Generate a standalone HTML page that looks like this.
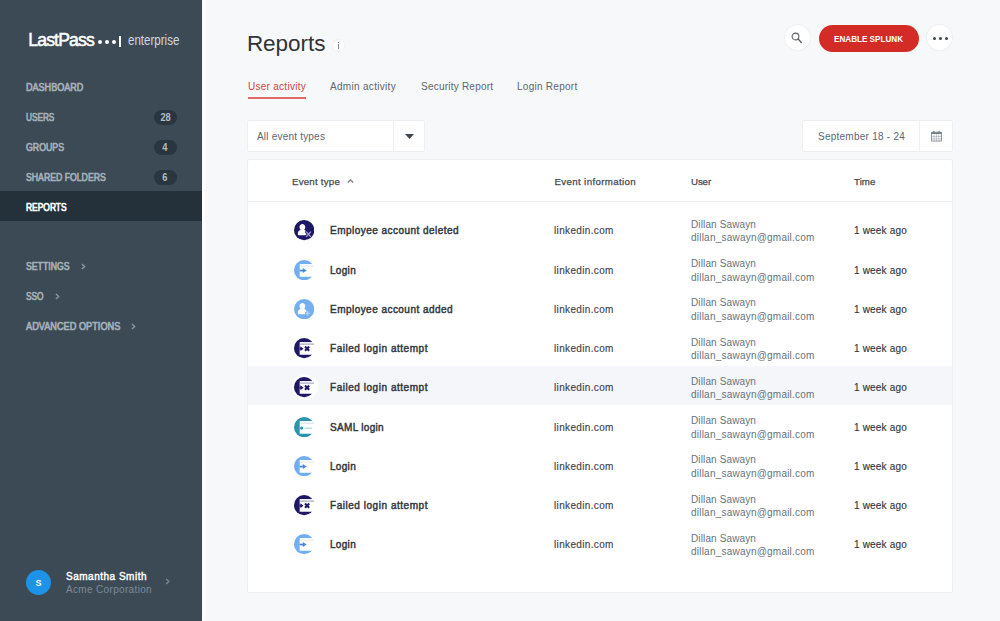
<!DOCTYPE html>
<html><head><meta charset="utf-8">
<style>
*{box-sizing:border-box;margin:0;padding:0}
html,body{width:1000px;height:621px;overflow:hidden}
body{font-family:"Liberation Sans",sans-serif;background:#f7f8fa;position:relative;color:#3a3f45}
.abs{position:absolute;white-space:nowrap}
#side{position:absolute;left:0;top:0;width:201.700px;height:621px;background:#3c4a56}
.nav{position:absolute;left:26.100px;font-size:10px;-webkit-text-stroke:0.65px;color:#a7b1b9;line-height:12px;white-space:nowrap;transform-origin:0 50%}
.badge{position:absolute;left:153.600px;width:23px;height:15px;border-radius:7.500px;background:#29353f;color:#b4bdc4;font-size:10px;font-weight:bold;text-align:center;line-height:15px}.badge span{display:inline-block;transform:scaleX(0.93)}
#active{position:absolute;left:0;top:191.200px;width:201.700px;height:29.600px;background:#25313a}
.tab{position:absolute;top:80px;font-size:10px;color:#5d6670;line-height:13px;white-space:nowrap}
.box{position:absolute;background:#fff;box-shadow:0 0 0 1px #eceef2;border-radius:1.500px}
.th{position:absolute;top:175px;font-size:9.7px;color:#454a51;-webkit-text-stroke:0.25px #454a51;line-height:13px;white-space:nowrap}
.row{position:absolute;left:248px;width:704px;height:39px}
.row div{position:absolute;white-space:nowrap;line-height:13px}
.lbl{left:82px;top:13.600px;font-size:10px;-webkit-text-stroke:0.45px #33383e;color:#33383e;transform-origin:0 50%}
.inf{left:306px;top:13.400px;font-size:10px;color:#3f444a;-webkit-text-stroke:0.15px #3f444a}
.un{left:443px;top:6.900px;font-size:10px;color:#69727b}
.um{left:443px;top:20.400px;font-size:10px;color:#69727b}
.tm{left:606px;top:13.400px;font-size:10px;color:#33383e;-webkit-text-stroke:0.15px #33383e}
.row svg{position:absolute;left:46.200px;top:9.600px}
</style></head><body>

<div class="abs" style="left:201.700px;top:0;width:4px;height:621px;background:linear-gradient(90deg,#fff 0,#fff 60%,#f7f8fa 100%)"></div>
<div id="side">
  <div class="abs" style="letter-spacing:-0.847px;left:28.300px;top:28.700px;font-size:17.6px;color:#fff;line-height:22px;-webkit-text-stroke:0.5px #fff">LastPass</div>
  <div class="abs" style="left:98.300px;top:40.200px;width:3.600px;height:3.600px;border-radius:2px;background:#fff"></div>
  <div class="abs" style="left:105.100px;top:40.200px;width:3.600px;height:3.600px;border-radius:2px;background:#fff"></div>
  <div class="abs" style="left:112px;top:40.200px;width:3.600px;height:3.600px;border-radius:2px;background:#fff"></div>
  <div class="abs" style="left:119.200px;top:36px;width:1.500px;height:11px;background:#fff"></div>
  <div class="abs" style="transform:scaleX(0.8255);left:128.400px;top:33px;font-size:14px;color:#d3d8dd;line-height:15px;transform-origin:0 50%">enterprise</div>

  <div class="nav" style="transform:scaleX(0.9044);top:82.0px">DASHBOARD</div>
  <div class="nav" style="transform:scaleX(0.8214);top:112.0px">USERS</div>
  <div class="badge" style="top:109.7px"><span>28</span></div>
  <div class="nav" style="transform:scaleX(0.8767);top:142.0px">GROUPS</div>
  <div class="badge" style="top:139.7px"><span>4</span></div>
  <div class="nav" style="transform:scaleX(0.8703);top:172.0px">SHARED FOLDERS</div>
  <div class="badge" style="top:169.7px"><span>6</span></div>
  <div id="active"></div>
  <div class="nav" style="transform:scaleX(0.8428);top:202.0px;color:#fff">REPORTS</div>
  <div class="nav" style="transform:scaleX(0.8697);top:261.0px">SETTINGS</div>
  <div class="nav" style="transform:scaleX(0.8331);top:291.0px">SSO</div>
  <div class="nav" style="transform:scaleX(0.9190);top:321.0px">ADVANCED OPTIONS</div>
  <svg class="abs" style="left:79px;top:262px" width="8" height="9" viewBox="0 0 8 9"><path d="M2.900 1.900 L5.700 4.500 L2.900 7.100" fill="none" stroke="#8d99a3" stroke-width="1.300"/></svg>
  <svg class="abs" style="left:53px;top:292px" width="8" height="9" viewBox="0 0 8 9"><path d="M2.900 1.900 L5.700 4.500 L2.900 7.100" fill="none" stroke="#8d99a3" stroke-width="1.300"/></svg>
  <svg class="abs" style="left:129px;top:322px" width="8" height="9" viewBox="0 0 8 9"><path d="M2.900 1.900 L5.700 4.500 L2.900 7.100" fill="none" stroke="#8d99a3" stroke-width="1.300"/></svg>

  <div class="abs" style="left:26px;top:570px;width:25px;height:25px;border-radius:12.500px;background:#1c93e6;color:#fff;font-size:9px;font-weight:bold;text-align:center;line-height:26px">S</div>
  <div class="abs" style="letter-spacing:0.504px;left:66px;top:570px;font-size:10px;-webkit-text-stroke:0.4px #fff;color:#fff;line-height:13px">Samantha Smith</div>
  <div class="abs" style="letter-spacing:0.338px;left:66px;top:583px;font-size:10px;color:#7d8a95;line-height:13px">Acme Corporation</div>
  <svg class="abs" style="left:163px;top:577px" width="8" height="9" viewBox="0 0 8 9"><path d="M3.100 1.900 L5.900 4.500 L3.100 7.100" fill="none" stroke="#7a8691" stroke-width="1.300"/></svg>
</div>

<div class="abs" style="letter-spacing:-0.042px;left:246.900px;top:30.300px;font-size:22.5px;color:#2f3338;line-height:28px">Reports</div>
<div class="abs" style="left:332.700px;top:40px;width:11px;height:11px;border-radius:5.500px;background:#fdfdfe;box-shadow:0 0 0 1px #f1f2f5"></div>
<div class="abs" style="left:337.700px;top:42px;width:1.100px;height:1.200px;background:#8e9399"></div><div class="abs" style="left:337.700px;top:44px;width:1.100px;height:4.600px;background:#8e9399"></div>

<!-- top right -->
<div class="abs" style="left:784.800px;top:25.400px;width:25px;height:25px;border-radius:13px;background:#fff;box-shadow:0 0 0 1px #eef0f3"></div>
<svg class="abs" style="left:790.400px;top:30.800px" width="14" height="14" viewBox="0 0 14 14"><circle cx="5.500" cy="5.500" r="3.400" fill="none" stroke="#5a6169" stroke-width="1.100"/><path d="M8.100 8.100 L11.400 11.400" stroke="#5a6169" stroke-width="1.400" stroke-linecap="round"/></svg>
<div class="abs" style="left:819px;top:24.500px;width:100px;height:27px;border-radius:13.500px;background:#d32c27"></div>
<div class="abs" style="transform:scaleX(0.8543);left:834px;top:32.800px;color:#fff;font-size:9.5px;font-weight:bold;line-height:12px;transform-origin:0 50%">ENABLE SPLUNK</div>
<div class="abs" style="left:927.200px;top:25.400px;width:25px;height:25px;border-radius:13px;background:#fff;box-shadow:0 0 0 1px #eef0f3"></div>
<div class="abs" style="left:932.6px;top:36.500px;width:3px;height:3px;border-radius:2px;background:#3f464d"></div>
<div class="abs" style="left:938.6px;top:36.500px;width:3px;height:3px;border-radius:2px;background:#3f464d"></div>
<div class="abs" style="left:944.6px;top:36.500px;width:3px;height:3px;border-radius:2px;background:#3f464d"></div>

<!-- tabs -->
<div class="tab" style="letter-spacing:0.273px;left:248px;color:#d4423e">User activity</div>
<div class="abs" style="left:248px;top:96.800px;width:58px;height:1.800px;background:#dc6a66"></div>
<div class="tab" style="letter-spacing:0.308px;left:330px">Admin activity</div>
<div class="tab" style="letter-spacing:0.225px;left:421px">Security Report</div>
<div class="tab" style="letter-spacing:0.270px;left:517px">Login Report</div>

<!-- filters -->
<div class="box" style="left:247.600px;top:120.700px;width:176.800px;height:30.600px"></div>
<div class="abs" style="left:393.200px;top:120.700px;width:1px;height:30.600px;background:#eef0f3"></div>
<div class="abs" style="letter-spacing:0.204px;left:257px;top:130px;font-size:10px;color:#5d6670;line-height:13px">All event types</div>
<svg class="abs" style="left:405px;top:134px" width="9" height="5" viewBox="0 0 9 5"><path d="M0 0 L9 0 L4.500 5 Z" fill="#3f464d"/></svg>

<div class="box" style="left:802.600px;top:120.700px;width:149.800px;height:30.600px"></div>
<div class="abs" style="left:919.400px;top:120.700px;width:1px;height:30.600px;background:#eef0f3"></div>
<div class="abs" style="letter-spacing:0.245px;left:818px;top:130px;font-size:10px;color:#5d6670;line-height:13px">September 18 - 24</div>
<svg class="abs" style="left:931px;top:130.200px" width="11" height="11.500" viewBox="0 0 12 13"><rect x="0.500" y="2.500" width="11" height="10" fill="#fbfbfc" stroke="#757d85" stroke-width="0.900"/><rect x="0.500" y="2.500" width="11" height="2" fill="#757d85"/><path d="M3 0.800v2.500M9 0.800v2.500" stroke="#757d85" stroke-width="1.200"/><path d="M3.300 5v7.500M6 5v7.500M8.700 5v7.500M0.500 7.300h11M0.500 10h11" stroke="#8a929a" stroke-width="0.500"/></svg>

<!-- table -->
<div class="box" style="left:247.600px;top:159.800px;width:704.800px;height:432px"></div>
<div class="abs" style="left:248px;top:201px;width:704px;height:1px;background:#eceef1"></div>
<div class="th" style="letter-spacing:0.222px;left:292px">Event type</div>
<svg class="abs" style="left:346px;top:178px" width="9" height="6" viewBox="0 0 9 6"><path d="M1.800 4.500 L4.500 1.800 L7.200 4.500" fill="none" stroke="#757d85" stroke-width="1.300"/></svg>
<div class="th" style="letter-spacing:0.359px;left:554.500px">Event information</div>
<div class="th" style="letter-spacing:-0.117px;left:691px">User</div>
<div class="th" style="letter-spacing:0.082px;left:854px">Time</div>



<div class="abs" style="left:248px;top:366.400px;width:704px;height:38.800px;background:#f5f6f9"></div>
<div class="abs" style="left:291.800px;top:374.400px;width:26px;height:26px;border-radius:13px;background:radial-gradient(circle,rgba(255,255,255,.9) 0,rgba(255,255,255,.75) 70%,rgba(255,255,255,0) 100%)"></div>
<div class="row" style="top:210.9px"><svg width="20.300" height="20.300" viewBox="0 0 20 20"><g fill="#1e1766"><circle cx="10" cy="10" r="10"/><path fill="#fff" d="M8.300 3.900c1.600 0 2.800 1.300 2.800 3.100 0 1-.4 1.900-1 2.500l0 .3c1.700.5 2.600 1.500 2.600 2.900v1.700c0 .4-.3.700-.7.700H4.500c-.4 0-.7-.3-.7-.7v-1.700c0-1.400.9-2.400 2.600-2.900l0-.3c-.6-.6-1-1.500-1-2.500 0-1.800 1.200-3.100 2.900-3.100z"/></g><path d="M11.600 11l5.200 6M16.800 11l-5.200 6" stroke="#1e1766" stroke-width="2.800"/><path d="M12 11.400l4.600 5.200M16.600 11.400l-4.600 5.200" stroke="#a9abd8" stroke-width="1.200"/></svg><div class="lbl" style="letter-spacing:0.464px">Employee account deleted</div><div class="inf" style="letter-spacing:0.351px">linkedin.com</div><div class="un" style="letter-spacing:0.125px">Dillan Sawayn</div><div class="um" style="letter-spacing:0.220px">dillan_sawayn@gmail.com</div><div class="tm" style="letter-spacing:0.184px">1 week ago</div></div>
<div class="row" style="top:250.15px"><svg width="20.300" height="20.300" viewBox="0 0 20 20"><g fill="#70aef0"><circle cx="10" cy="10" r="10"/><rect x="5.600" y="4" width="16" height="12.500" fill="#fff"/></g><path d="M5.600 5.950h15" stroke="#cbd9ea" stroke-width="0.600"/><path d="M5.600 10.400h4" stroke="#4585de" stroke-width="1.700"/><path d="M8.700 8l3.700 2.400-3.700 2.400z" fill="#4585de"/></svg><div class="lbl" style="letter-spacing:0.306px">Login</div><div class="inf" style="letter-spacing:0.351px">linkedin.com</div><div class="un" style="letter-spacing:0.125px">Dillan Sawayn</div><div class="um" style="letter-spacing:0.220px">dillan_sawayn@gmail.com</div><div class="tm" style="letter-spacing:0.184px">1 week ago</div></div>
<div class="row" style="top:289.4px"><svg width="20.300" height="20.300" viewBox="0 0 20 20"><g fill="#74aff0"><circle cx="10" cy="10" r="10"/><path fill="#fff" d="M8.300 3.900c1.600 0 2.800 1.300 2.800 3.100 0 1-.4 1.900-1 2.500l0 .3c1.700.5 2.600 1.500 2.600 2.900v1.700c0 .4-.3.700-.7.700H4.500c-.4 0-.7-.3-.7-.7v-1.700c0-1.400.9-2.400 2.600-2.900l0-.3c-.6-.6-1-1.500-1-2.500 0-1.800 1.200-3.100 2.900-3.100z"/></g><path d="M13.500 11.400v5.400M10.800 14.100h5.400" stroke="#74aff0" stroke-width="2.600"/><path d="M13.500 12v4.200M11.400 14.100h4.200" stroke="#c9dff9" stroke-width="1"/></svg><div class="lbl" style="letter-spacing:0.461px">Employee account added</div><div class="inf" style="letter-spacing:0.351px">linkedin.com</div><div class="un" style="letter-spacing:0.125px">Dillan Sawayn</div><div class="um" style="letter-spacing:0.220px">dillan_sawayn@gmail.com</div><div class="tm" style="letter-spacing:0.184px">1 week ago</div></div>
<div class="row" style="top:328.65px"><svg width="20.300" height="20.300" viewBox="0 0 20 20"><g fill="#1e1766"><circle cx="10" cy="10" r="10"/><rect x="5.600" y="4" width="16" height="12.500" fill="#fff"/></g><path d="M5.600 6h15" stroke="#8c8bb0" stroke-width="0.900"/><path d="M5.600 10.500h1.800" stroke="#1e1766" stroke-width="1.900"/><path d="M6.300 8.100l3.100 2.400-3.100 2.400z" fill="#1e1766"/><path d="M10.800 8.400l4.200 4.200M15 8.400l-4.200 4.200" stroke="#1e1766" stroke-width="2"/></svg><div class="lbl" style="letter-spacing:0.536px">Failed login attempt</div><div class="inf" style="letter-spacing:0.351px">linkedin.com</div><div class="un" style="letter-spacing:0.125px">Dillan Sawayn</div><div class="um" style="letter-spacing:0.220px">dillan_sawayn@gmail.com</div><div class="tm" style="letter-spacing:0.184px">1 week ago</div></div>
<div class="row" style="top:367.9px"><svg width="20.300" height="20.300" viewBox="0 0 20 20"><g fill="#1e1766"><circle cx="10" cy="10" r="10"/><rect x="5.600" y="4" width="16" height="12.500" fill="#fff"/></g><path d="M5.600 6h15" stroke="#8c8bb0" stroke-width="0.900"/><path d="M5.600 10.500h1.800" stroke="#1e1766" stroke-width="1.900"/><path d="M6.300 8.100l3.100 2.400-3.100 2.400z" fill="#1e1766"/><path d="M10.800 8.400l4.200 4.200M15 8.400l-4.200 4.200" stroke="#1e1766" stroke-width="2"/></svg><div class="lbl" style="letter-spacing:0.536px">Failed login attempt</div><div class="inf" style="letter-spacing:0.351px">linkedin.com</div><div class="un" style="letter-spacing:0.125px">Dillan Sawayn</div><div class="um" style="letter-spacing:0.220px">dillan_sawayn@gmail.com</div><div class="tm" style="letter-spacing:0.184px">1 week ago</div></div>
<div class="row" style="top:407.15px"><svg width="20.300" height="20.300" viewBox="0 0 20 20"><g fill="#2b93ad"><circle cx="10" cy="10" r="10"/><rect x="5.600" y="4" width="16" height="12.500" fill="#fff"/></g><path d="M5.600 6.050h15" stroke="#b5d5dc" stroke-width="0.700"/><circle cx="7.500" cy="10.900" r="1.600" fill="#2b93ad"/><path d="M10.400 11.100h7.500" stroke="#b9dde4" stroke-width="1.400"/></svg><div class="lbl" style="letter-spacing:0.322px">SAML login</div><div class="inf" style="letter-spacing:0.351px">linkedin.com</div><div class="un" style="letter-spacing:0.125px">Dillan Sawayn</div><div class="um" style="letter-spacing:0.220px">dillan_sawayn@gmail.com</div><div class="tm" style="letter-spacing:0.184px">1 week ago</div></div>
<div class="row" style="top:446.4px"><svg width="20.300" height="20.300" viewBox="0 0 20 20"><g fill="#70aef0"><circle cx="10" cy="10" r="10"/><rect x="5.600" y="4" width="16" height="12.500" fill="#fff"/></g><path d="M5.600 5.950h15" stroke="#cbd9ea" stroke-width="0.600"/><path d="M5.600 10.400h4" stroke="#4585de" stroke-width="1.700"/><path d="M8.700 8l3.700 2.400-3.700 2.400z" fill="#4585de"/></svg><div class="lbl" style="letter-spacing:0.306px">Login</div><div class="inf" style="letter-spacing:0.351px">linkedin.com</div><div class="un" style="letter-spacing:0.125px">Dillan Sawayn</div><div class="um" style="letter-spacing:0.220px">dillan_sawayn@gmail.com</div><div class="tm" style="letter-spacing:0.184px">1 week ago</div></div>
<div class="row" style="top:485.65px"><svg width="20.300" height="20.300" viewBox="0 0 20 20"><g fill="#1e1766"><circle cx="10" cy="10" r="10"/><rect x="5.600" y="4" width="16" height="12.500" fill="#fff"/></g><path d="M5.600 6h15" stroke="#8c8bb0" stroke-width="0.900"/><path d="M5.600 10.500h1.800" stroke="#1e1766" stroke-width="1.900"/><path d="M6.300 8.100l3.100 2.400-3.100 2.400z" fill="#1e1766"/><path d="M10.800 8.400l4.200 4.200M15 8.400l-4.200 4.200" stroke="#1e1766" stroke-width="2"/></svg><div class="lbl" style="letter-spacing:0.536px">Failed login attempt</div><div class="inf" style="letter-spacing:0.351px">linkedin.com</div><div class="un" style="letter-spacing:0.125px">Dillan Sawayn</div><div class="um" style="letter-spacing:0.220px">dillan_sawayn@gmail.com</div><div class="tm" style="letter-spacing:0.184px">1 week ago</div></div>
<div class="row" style="top:524.9px"><svg width="20.300" height="20.300" viewBox="0 0 20 20"><g fill="#70aef0"><circle cx="10" cy="10" r="10"/><rect x="5.600" y="4" width="16" height="12.500" fill="#fff"/></g><path d="M5.600 5.950h15" stroke="#cbd9ea" stroke-width="0.600"/><path d="M5.600 10.400h4" stroke="#4585de" stroke-width="1.700"/><path d="M8.700 8l3.700 2.400-3.700 2.400z" fill="#4585de"/></svg><div class="lbl" style="letter-spacing:0.306px">Login</div><div class="inf" style="letter-spacing:0.351px">linkedin.com</div><div class="un" style="letter-spacing:0.125px">Dillan Sawayn</div><div class="um" style="letter-spacing:0.220px">dillan_sawayn@gmail.com</div><div class="tm" style="letter-spacing:0.184px">1 week ago</div></div>
</body></html>
